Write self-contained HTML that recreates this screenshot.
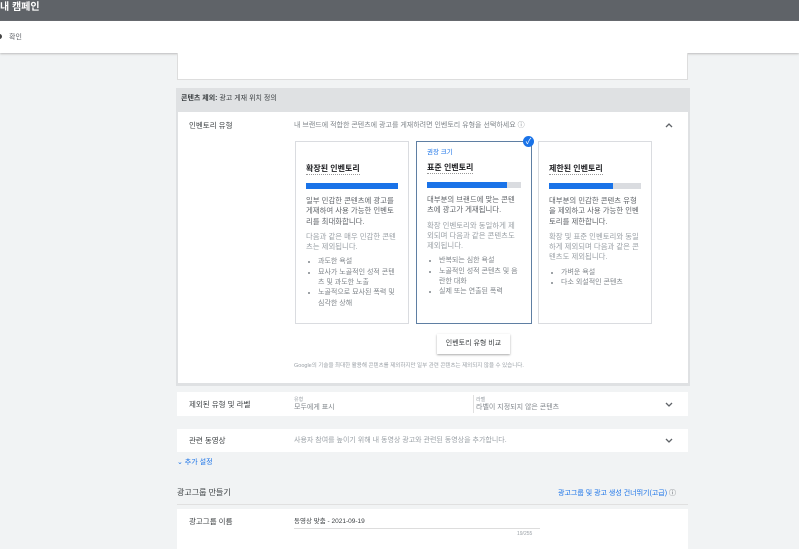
<!DOCTYPE html><html><head><meta charset="utf-8"><style>
*{margin:0;padding:0;box-sizing:border-box}
body{width:799px;height:545px;overflow:hidden;background:#f1f3f4;font-family:"Liberation Sans","Noto Sans CJK KR",sans-serif;position:relative;color:#3c4043}
.a{position:absolute}
.t{font-size:7px;color:#5f6368;line-height:11px}
.card{position:absolute;top:141px;width:114px;height:183px;background:#fff;border:1px solid #dadce0;padding:0 10px}
.card h4{font-size:8px;color:#202124;margin-top:21px;border-bottom:1px dotted #999;display:inline-block}
.bar{height:6px;background:#dadce0;margin:7px 0 7px;position:relative}
.bar i{position:absolute;left:0;top:0;bottom:0;background:#1a73e8}
.card p{font-size:7.4px;line-height:10.3px;color:#5f6368;margin-bottom:5px}
.card p.l{color:#9aa0a6}
.card ul{font-size:7px;line-height:10.3px;color:#80868b;padding-left:12px}
</style></head><body>
<div class="a" style="left:0;top:0;width:799px;height:21px;background:#5f6368;color:#fff;font-size:10px;font-weight:bold;line-height:15px">내 캠페인</div>
<div class="a" style="left:0;top:21px;width:799px;height:32px;background:#fff;box-shadow:0 1px 2px #bbb"><span class="t" style="position:absolute;left:9px;top:11px;font-size:7px">확인</span><span class="a" style="left:-3px;top:13px;width:5px;height:5px;border-radius:50%;background:#444"></span></div>
<div class="a" style="left:177px;top:53px;width:511px;height:27px;background:#fff;border:1px solid #ddd;border-top:none"></div>
<div class="a" style="left:176px;top:88px;width:514px;height:298px;background:#dfe1e3"></div>
<div class="a" style="left:181px;top:93px;font-size:7px;font-weight:bold;color:#3c4043">콘텐츠 제외: <span style="font-weight:normal">광고 게재 위치 정의</span></div>
<div class="a" style="left:178px;top:112px;width:510px;height:271px;background:#fff"></div>
<div class="a t" style="left:189px;top:120px;font-size:7.5px;color:#3c4043">인벤토리 유형</div>
<div class="a t" style="left:294px;top:120px;color:#80868b">내 브랜드에 적합한 콘텐츠에 광고를 게재하려면 인벤토리 유형을 선택하세요 ⓘ</div>
<svg class="a" style="left:665px;top:123px" width="8" height="5"><path d="M1 4L4 1L7 4" stroke="#5f6368" stroke-width="1.3" fill="none"/></svg>
<div class="card" style="left:295px"><h4>확장된 인벤토리</h4><div class="bar"><i style="width:100%"></i></div><p>일부 민감한 콘텐츠에 광고를 게재하여 사용 가능한 인벤토리를 최대화합니다.</p><p class="l">다음과 같은 매우 민감한 콘텐츠는 제외됩니다.</p><ul><li>과도한 욕설</li><li>묘사가 노골적인 성적 콘텐츠 및 과도한 노출</li><li>노골적으로 묘사된 폭력 및 심각한 상해</li></ul></div>
<div class="card" style="left:416px;width:116px;border:1.5px solid #5f7fa3"><div style="font-size:6.5px;color:#1a73e8;margin-top:7px;line-height:8px">권장 크기</div><h4 style="margin-top:5px">표준 인벤토리</h4><div class="bar"><i style="width:85%"></i></div><p>대부분의 브랜드에 맞는 콘텐츠에 광고가 게재됩니다.</p><p class="l">확장 인벤토리와 동일하게 제외되며 다음과 같은 콘텐츠도 제외됩니다.</p><ul><li>반복되는 심한 욕설</li><li>노골적인 성적 콘텐츠 및 음란한 대화</li><li>실제 또는 연출된 폭력</li></ul></div>
<div class="a" style="left:523px;top:136px;width:11px;height:11px;border-radius:50%;background:#1a73e8;color:#fff;font-size:8px;line-height:11px;text-align:center">✓</div>
<div class="card" style="left:538px"><h4>제한된 인벤토리</h4><div class="bar"><i style="width:70%"></i></div><p>대부분의 민감한 콘텐츠 유형을 제외하고 사용 가능한 인벤토리를 제한합니다.</p><p class="l">확장 및 표준 인벤토리와 동일하게 제외되며 다음과 같은 콘텐츠도 제외됩니다.</p><ul><li>가벼운 욕설</li><li>다소 외설적인 콘텐츠</li></ul></div>
<div class="a" style="left:437px;top:334px;width:73px;height:20px;background:#fff;box-shadow:0 1px 2px #aaa;font-size:7px;line-height:20px;text-align:center;color:#3c4043">인벤토리 유형 비교</div>
<div class="a" style="left:294px;top:361px;font-size:5.5px;color:#9aa0a6">Google의 기술을 최대한 활용해 콘텐츠를 제외하지만 일부 관련 콘텐츠는 제외되지 않을 수 있습니다.</div>
<div class="a" style="left:177px;top:392px;width:511px;height:24px;background:#fff"></div>
<div class="a t" style="left:189px;top:399px;font-size:7.5px;color:#3c4043">제외된 유형 및 라벨</div>
<div class="a" style="left:294px;top:396px;font-size:5px;color:#9aa0a6">유형</div><div class="a t" style="left:294px;top:402px;color:#80868b">모두에게 표시</div>
<div class="a" style="left:476px;top:396px;font-size:5px;color:#9aa0a6">라벨</div><div class="a t" style="left:476px;top:402px;color:#80868b">라벨이 지정되지 않은 콘텐츠</div>
<div class="a" style="left:473px;top:395px;width:1px;height:18px;background:#e0e0e0"></div>
<svg class="a" style="left:665px;top:402px" width="8" height="5"><path d="M1 1L4 4L7 1" stroke="#5f6368" stroke-width="1.3" fill="none"/></svg>
<div class="a" style="left:177px;top:429px;width:511px;height:23px;background:#fff"></div>
<div class="a t" style="left:189px;top:435px;font-size:7.5px;color:#3c4043">관련 동영상</div>
<div class="a t" style="left:294px;top:435px;color:#9aa0a6">사용자 참여를 높이기 위해 내 동영상 광고와 관련된 동영상을 추가합니다.</div>
<svg class="a" style="left:665px;top:438px" width="8" height="5"><path d="M1 1L4 4L7 1" stroke="#5f6368" stroke-width="1.3" fill="none"/></svg>
<div class="a" style="left:177px;top:457px;font-size:7px;color:#1a73e8">⌄ 추가 설정</div>
<div class="a" style="left:177px;top:487px;font-size:8px;color:#3c4043">광고그룹 만들기</div>
<div class="a" style="left:558px;top:488px;font-size:7px;color:#1a73e8">광고그룹 및 광고 생성 건너뛰기(고급) <span style="color:#5f6368">ⓘ</span></div>
<div class="a" style="left:177px;top:504px;width:511px;height:1px;background:#e0e0e0"></div>
<div class="a" style="left:177px;top:509px;width:511px;height:40px;background:#fff"></div>
<div class="a t" style="left:189px;top:516px;font-size:7.5px;color:#3c4043">광고그룹 이름</div>
<div class="a" style="left:294px;top:515px;font-size:6.5px;color:#3c4043">동영상 맞춤 - 2021-09-19</div>
<div class="a" style="left:294px;top:528px;width:246px;height:1px;background:#ddd"></div>
<div class="a" style="left:517px;top:531px;font-size:5px;color:#9aa0a6">19/255</div>
</body></html>
